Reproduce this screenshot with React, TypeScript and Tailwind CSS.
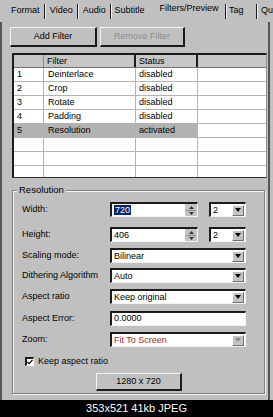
import React from 'react';

const sunken =
  'border-t-2 border-l-2 border-t-[#1c1c1c] border-l-[#1c1c1c] border-b border-r border-b-[#f4f4f4] border-r-[#f4f4f4]';
const raised =
  'border-t border-l border-t-[#f4f4f4] border-l-[#f4f4f4] border-b-2 border-r-2 border-b-[#1c1c1c] border-r-[#1c1c1c]';

function Arrow({ color = '#000' }: { color?: string }) {
  return (
    <svg width="6" height="4" viewBox="0 0 6 4">
      <path d="M0 0h6L3 4z" fill={color} />
    </svg>
  );
}

function DropBtn({ dim }: { dim?: boolean }) {
  return (
    <span className="mr-[1px] flex h-[11px] w-[12px] items-center justify-center border-t border-l border-t-white border-l-white border-b border-r border-b-[#707070] border-r-[#707070] bg-[#c4c4c4]">
      <Arrow color={dim ? '#8a8a8a' : '#000'} />
    </span>
  );
}

function Combo({ value, width, textClass = '', dim }: { value: string; width: string; textClass?: string; dim?: boolean }) {
  return (
    <div className={`flex h-[15px] items-center bg-white ${sunken} ${width}`}>
      <span className={`flex-1 pl-[2px] leading-none ${textClass}`}>{value}</span>
      <DropBtn dim={dim} />
    </div>
  );
}

function Spin({ value, selected }: { value: string; selected?: boolean }) {
  return (
    <div className={`flex h-[15px] w-[88px] items-center bg-white ${sunken}`}>
      <span className="flex-1 pl-[2px] leading-none">
        {selected ? <span className="bg-[#0a246a] px-[1px] text-white">{value}</span> : value}
      </span>
      <span className="flex h-[12px] w-[12px] flex-col items-center justify-center gap-[1px] bg-[#c4c4c4]">
        <svg width="5" height="3" viewBox="0 0 5 3">
          <path d="M0 3h5L2.5 0z" fill="#333" />
        </svg>
        <span className="h-px w-[10px] bg-[#909090]" />
        <svg width="5" height="3" viewBox="0 0 5 3">
          <path d="M0 0h5L2.5 3z" fill="#333" />
        </svg>
      </span>
    </div>
  );
}

function Row({ label, mt, children }: { label: string; mt: string; children: React.ReactNode }) {
  return (
    <div className={`flex items-center ${mt}`}>
      <span className="w-[97px] pl-[9px] leading-none">{label}</span>
      {children}
    </div>
  );
}

const Sep = () => <span className="h-[15px] w-[2px] border-l border-l-[#1c1c1c] border-r border-r-[#f0f0f0]" />;

const rows = [
  ['1', 'Deinterlace', 'disabled'],
  ['2', 'Crop', 'disabled'],
  ['3', 'Rotate', 'disabled'],
  ['4', 'Padding', 'disabled'],
  ['5', 'Resolution', 'activated'],
  ['', '', ''],
  ['', '', ''],
  ['', '', ''],
];

export default function App() {
  return (
    <div className="flex h-[417px] w-[273px] flex-col overflow-hidden bg-[#c0c0c0] font-['Liberation_Sans',Arial,sans-serif] text-[9px] text-black">
      <div className="flex h-[22px] shrink-0 items-center whitespace-nowrap pl-[11px]">
        <span className="w-[33px]">Format</span>
        <Sep />
        <span className="ml-[4px] w-[27px]">Video</span>
        <Sep />
        <span className="ml-[4px] w-[27px]">Audio</span>
        <Sep />
        <span className="ml-[3px] w-[45px]">Subtitle</span>
        <span className="w-[66px] -translate-y-[2px]">Filters/Preview</span>
        <Sep />
        <span className="ml-[2px] w-[27px]">Tag</span>
        <Sep />
        <span className="ml-[3px]">Qu</span>
      </div>

      <div className="flex h-[378px] w-[270px] shrink-0 flex-col border-l-2 border-r-2 border-l-[#555] border-r-[#555]">
        <div className="mt-[5px] flex h-[20px] items-stretch">
          <button type="button" className={`ml-[8px] w-[87px] ${raised}`}>
            Add Filter
          </button>
          <button type="button" className={`ml-[3px] w-[85px] text-[#8c8c8c] ${raised}`}>
            Remove Filter
          </button>
        </div>

        <div className="mt-[6px] ml-[10px] h-[125px] w-[255px] overflow-hidden border-t-2 border-l-2 border-t-[#1c1c1c] border-l-[#1c1c1c] border-b border-r border-b-[#303030] border-r-[#909090] bg-white">
          <div className="flex h-[13px] border-b border-b-[#707070] bg-[#c6c6c6]">
            <span className="w-[30px] border-r border-r-[#8a8a8a]" />
            <span className="w-[92px] border-r-2 border-r-[#1c1c1c] pl-[3px] leading-[12px]">Filter</span>
            <span className="w-[62px] border-r-2 border-r-[#1c1c1c] pl-[3px] leading-[12px]">Status</span>
            <span className="flex-1" />
          </div>
          {rows.map((r, i) => (
            <div key={i} className="flex h-[14px] border-b border-b-[#b4b4b4]">
              <div className={`flex ${i === 4 ? 'bg-[#b2b2b2]' : ''}`}>
                <span className="w-[30px] border-r border-r-[#b4b4b4] pl-[3px] leading-[13px]">{r[0]}</span>
                <span className="w-[92px] border-r border-r-[#b4b4b4] pl-[4px] leading-[13px]">{r[1]}</span>
                <span className="w-[62px] border-r border-r-[#b4b4b4] pl-[3px] leading-[13px]">{r[2]}</span>
              </div>
              <span className="flex-1" />
            </div>
          ))}
        </div>

        <div className="relative mt-[12px] ml-[10px] flex h-[204px] w-[253px] flex-col border border-[#808080] shadow-[inset_1px_1px_0_#f4f4f4,1px_1px_0_#f4f4f4]">
          <span className="absolute -top-[6px] left-[4px] bg-[#c0c0c0] px-[2px] text-[9.5px] leading-none">Resolution</span>
          <Row label="Width:" mt="mt-[11px]">
            <Spin value="720" selected />
            <span className="ml-[11px]">
              <Combo value="2" width="w-[37px]" />
            </span>
          </Row>
          <Row label="Height:" mt="mt-[10px]">
            <Spin value="406" />
            <span className="ml-[11px]">
              <Combo value="2" width="w-[37px]" />
            </span>
          </Row>
          <Row label="Scaling mode:" mt="mt-[6px]">
            <Combo value="Bilinear" width="w-[136px]" />
          </Row>
          <Row label="Dithering Algorithm" mt="mt-[5px]">
            <Combo value="Auto" width="w-[136px]" />
          </Row>
          <Row label="Aspect ratio" mt="mt-[6px]">
            <Combo value="Keep original" width="w-[136px]" />
          </Row>
          <Row label="Aspect Error:" mt="mt-[7px]">
            <div className={`flex h-[15px] w-[136px] items-center bg-white pl-[2px] ${sunken}`}>0.0000</div>
          </Row>
          <Row label="Zoom:" mt="mt-[6px]">
            <Combo value="Fit To Screen" width="w-[136px]" textClass="text-[#9a2a2a]" dim />
          </Row>
          <div className="mt-[10px] flex items-center pl-[12px]">
            <span className={`flex h-[9px] w-[9px] items-center justify-center bg-white ${sunken}`}>
              <svg width="7" height="6" viewBox="0 0 7 6">
                <path d="M0.5 3l2 2 4-4.5" fill="none" stroke="#000" strokeWidth="1.4" />
              </svg>
            </span>
            <span className="ml-[4px] leading-none">Keep aspect ratio</span>
          </div>
          <div className="mt-[7px] flex">
            <button type="button" className={`ml-[83px] h-[18px] w-[86px] ${raised}`}>
              1280 x 720
            </button>
          </div>
        </div>
      </div>

      <div className="flex flex-1 items-center justify-center bg-black font-['Liberation_Sans',Arial,sans-serif] text-[11px] leading-none text-white">
        353x521 41kb JPEG
      </div>
    </div>
  );
}
